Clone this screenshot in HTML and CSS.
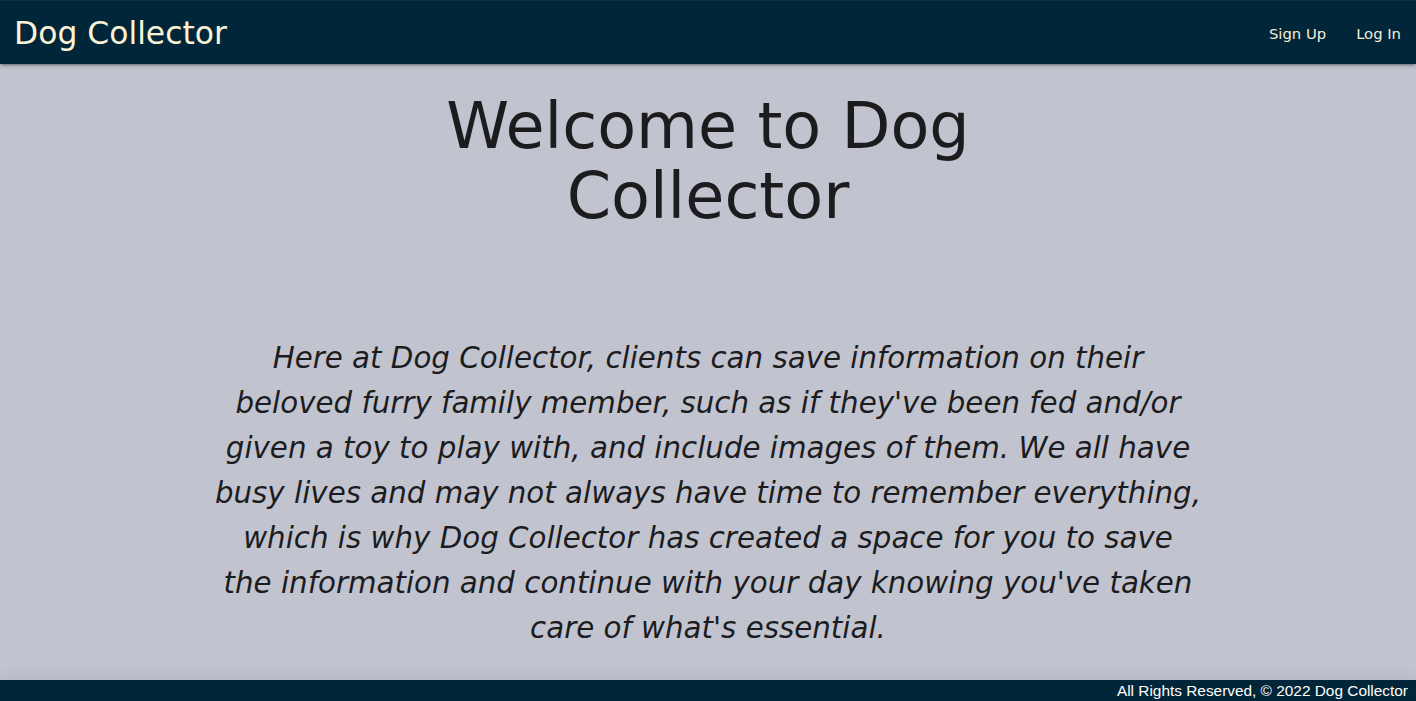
FILE: index.html
```html
<!DOCTYPE html>
<html lang="en">
<head>
<meta charset="utf-8">
<title>Dog Collector</title>
<link rel="stylesheet" href="styles.css">
</head>
<body>
<nav class="nav">
  <a class="brand" href="#">Dog Collector</a>
  <ul class="links">
    <li><a href="#">Sign Up</a></li>
    <li><a href="#">Log In</a></li>
  </ul>
</nav>
<main class="main">
  <h1 class="title">Welcome to Dog<br>Collector</h1>
  <p class="intro">Here at Dog Collector, clients can save information on their<br>
beloved furry family member, such as if they've been fed and/or<br>
given a toy to play with, and include images of them. We all have<br>
busy lives and may not always have time to remember everything,<br>
which is why Dog Collector has created a space for you to save<br>
the information and continue with your day knowing you've taken<br>
care of what's essential.</p>
</main>
<footer class="footer">All Rights Reserved, &copy; 2022 Dog Collector</footer>
</body>
</html>
```

FILE: styles.css
```css
* { box-sizing: border-box; }
html, body { margin: 0; padding: 0; }
body {
  min-height: 100vh;
  display: flex;
  flex-direction: column;
  background: #c1c4cf;
  color: #1c1c1e;
  font-family: "DejaVu Sans", "Noto Sans", sans-serif;
}
.nav {
  height: 64px;
  background: #022639;
  border-top: 1px solid #10303f;
  display: flex;
  align-items: center;
  justify-content: space-between;
  box-shadow: 0 2px 2px 0 rgba(0,0,0,0.14), 0 3px 1px -2px rgba(0,0,0,0.12), 0 1px 5px 0 rgba(0,0,0,0.2);
  position: relative;
  z-index: 2;
}
.brand {
  color: #fbf3d7;
  text-decoration: none;
  font-size: 31.4px;
  font-weight: 400;
  padding: 1px 0 0 14px;
}
.links {
  list-style: none;
  margin: 0;
  padding: 0;
  display: flex;
}
.links a {
  display: block;
  padding: 1px 15px 0;
  color: #f3eedb;
  text-decoration: none;
  font-size: 14.8px;
}
.main {
  flex: 1;
  display: flex;
  flex-direction: column;
  align-items: center;
  text-align: center;
}
.title {
  margin: 26.5px 0 0;
  font-size: 63.6px;
  font-weight: 400;
  line-height: 70px;
}
.intro {
  margin: 105px 0 0;
  font-size: 29.3px;
  font-style: italic;
  font-weight: 400;
  line-height: 45px;
}
.footer {
  height: 21px;
  background: #022639;
  color: #ffffff;
  font-family: "Liberation Sans", Arial, sans-serif;
  font-size: 15.4px;
  line-height: 21px;
  text-align: right;
  padding-right: 8px;
  box-shadow: 0 -4px 14px rgba(0,0,0,0.06);
}
```
